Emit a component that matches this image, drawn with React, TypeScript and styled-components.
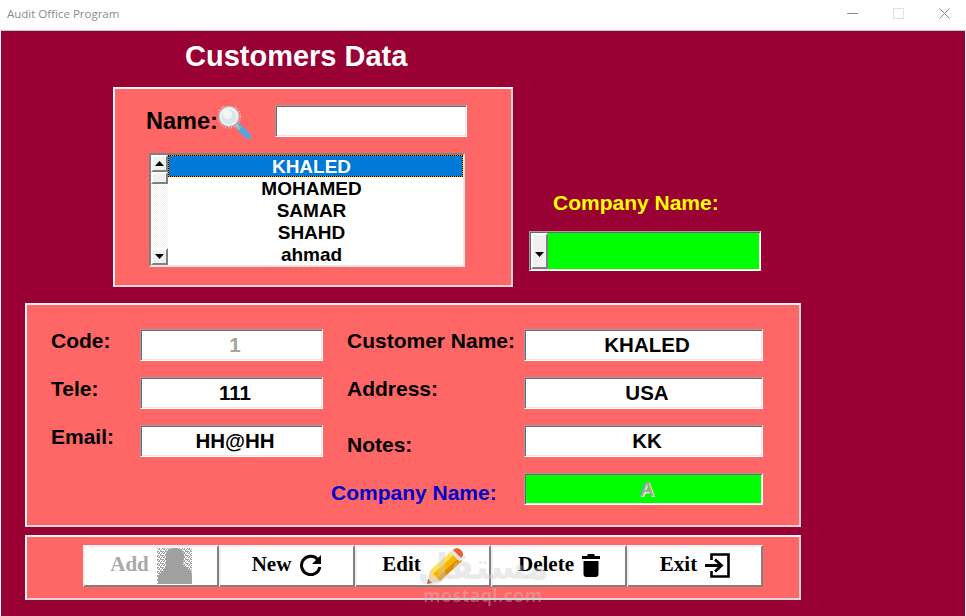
import React from "react";
import styled, { createGlobalStyle, css } from "styled-components";

const Global = createGlobalStyle`
  html, body { margin: 0; padding: 0; background: #fff; width: 966px; height: 616px; overflow: hidden; }
  * { box-sizing: border-box; }
`;

const sunken = css`
  border: 1px solid;
  border-color: #a0a0a0 #fff #fff #a0a0a0;
  box-shadow: inset 1px 1px 0 #696969, inset -1px -1px 0 #e6e6e6;
`;

const Win = styled.div`
  width: 966px;
  height: 616px;
  display: flex;
  flex-direction: column;
  background: #fff;
  position: relative;
  overflow: hidden;
`;
const TitleBar = styled.div`
  height: 31px;
  flex: none;
  display: flex;
  align-items: center;
  justify-content: space-between;
  padding: 0 16px 3px 7px;
  border-bottom: 1px solid #c8c8c8;
`;
const WinTitle = styled.span`
  font: 11.5px "Open Sans", sans-serif;
  color: #8c8c8c;
`;
const WinControls = styled.div`
  display: flex;
  gap: 35px;
  align-items: center;
`;
const Form = styled.div`
  flex: 1;
  margin: 0 1px;
  background: #990033;
  display: flex;
  flex-direction: column;
  font-family: "Liberation Sans", Arial, sans-serif;
  font-weight: bold;
`;
const TopRow = styled.div`
  display: flex;
  padding-left: 112px;
`;
const SearchColumn = styled.div`
  width: 400px;
  display: flex;
  flex-direction: column;
`;
const Heading = styled.h1`
  margin: 0;
  height: 56px;
  padding: 8px 0 0 72px;
  font-size: 29px;
  line-height: 34px;
  color: #fff;
`;
const Panel = styled.div`
  background: #ff6666;
  border: 2px solid;
  border-color: #f4f4f4 #d8d8d8 #d8d8d8 #f4f4f4;
`;
const SearchPanel = styled(Panel)`
  height: 200px;
  padding: 16px 0 0 31px;
`;
const NameRow = styled.div`
  display: flex;
  align-items: center;
  height: 32px;
`;
const NameLabel = styled.label`
  font-size: 23.5px;
  color: #000;
  width: 72px;
`;
const SearchInput = styled.input`
  margin-left: 24px;
  width: 192px;
  height: 32px;
  background: #fff;
  ${sunken}
  outline: none;
`;
const ListBox = styled.div`
  margin: 16px 0 0 3px;
  width: 316px;
  height: 114px;
  background: #fff;
  display: flex;
  border: 2px solid;
  border-color: #808080 #e8e8e8 #e8e8e8 #808080;
`;
const ScrollBar = styled.div`
  width: 17px;
  flex: none;
  display: flex;
  flex-direction: column;
  background: repeating-conic-gradient(#f0f0f0 0 25%, #fff 0 50%) 0 0 / 2px 2px;
`;
const ScrollButton = styled.div<{ $h?: number }>`
  width: 17px;
  height: ${(p) => p.$h ?? 17}px;
  flex: none;
  background: #f0f0f0;
  border: 2px solid;
  border-color: #fff #808080 #808080 #fff;
  display: flex;
  align-items: center;
  justify-content: center;
`;
const Spacer = styled.div`
  flex: 1;
`;
const Rows = styled.div`
  flex: 1;
  display: flex;
  flex-direction: column;
`;
const ListRow = styled.div<{ $selected?: boolean }>`
  height: 22px;
  line-height: 21px;
  font-size: 19px;
  text-align: center;
  padding-right: 8px;
  color: ${(p) => (p.$selected ? "#fff" : "#000")};
  border: 1px ${(p) => (p.$selected ? "dotted #000" : "solid transparent")};
  background: ${(p) =>
    p.$selected ? "linear-gradient(#0078d7,#0078d7) padding-box, #ff9000 border-box" : "transparent"};
`;
const CompanyColumn = styled.div`
  margin-left: 16px;
  padding-top: 160px;
  display: flex;
  flex-direction: column;
`;
const CompanyHeading = styled.div`
  font-size: 21px;
  line-height: 24px;
  color: #ffff00;
  padding-left: 24px;
`;
const Combo = styled.div`
  margin-top: 16px;
  width: 232px;
  height: 40px;
  background: #00ff00;
  display: flex;
  padding: 1px;
  ${sunken}
`;
const ComboButton = styled.div`
  width: 17px;
  background: #f0f0f0;
  border: 2px solid;
  border-color: #fff #808080 #808080 #fff;
  display: flex;
  align-items: center;
  justify-content: center;
  padding-top: 6px;
`;
const DetailsPanel = styled(Panel)`
  margin: 16px 0 0 24px;
  width: 776px;
  height: 224px;
  padding: 24px 0 0 24px;
  display: grid;
  grid-template-columns: 89px 183px 201px 239px;
  grid-auto-rows: 32px;
  row-gap: 16px;
  align-items: center;
`;
const FieldLabel = styled.label<{ $left?: number; $top?: number; $bottom?: number; $color?: string }>`
  font-size: 21px;
  line-height: 24px;
  color: ${(p) => p.$color ?? "#000"};
  padding-left: ${(p) => p.$left ?? 0}px;
  padding-top: ${(p) => p.$top ?? 0}px;
  padding-bottom: ${(p) => p.$bottom ?? 0}px;
  white-space: nowrap;
`;
const Field = styled.input<{ $green?: boolean; $muted?: boolean }>`
  width: 100%;
  height: 32px;
  font: bold 20.5px "Liberation Sans", Arial, sans-serif;
  text-align: center;
  color: ${(p) => (p.$muted ? "#a8a498" : "#000")};
  text-shadow: ${(p) => (p.$muted ? "1px 1px 0 #fff" : "none")};
  background: ${(p) => (p.$green ? "#00ff00" : "#fff")};
  ${sunken}
  outline: none;
  padding: 0 0 1px 7px;
`;
const EmptyCell = styled.div`
  grid-column: span 2;
`;
const ButtonPanel = styled(Panel)`
  margin: 8px 0 0 24px;
  width: 776px;
  height: 65px;
  padding: 8px 0 0 56px;
  display: flex;
  align-items: flex-start;
`;
const ActionButton = styled.button<{ $disabled?: boolean }>`
  width: 136px;
  height: 42px;
  padding: 0 0 4px;
  display: flex;
  align-items: center;
  justify-content: center;
  gap: 8px;
  background: #fff;
  border: 2px solid;
  border-color: #f0f0f0 #808080 #808080 #f0f0f0;
  font: bold 21px "Liberation Serif", "Times New Roman", serif;
  color: ${(p) => (p.$disabled ? "#a9a9a9" : "#000")};
`;
const Watermark = styled.div`
  position: absolute;
  left: 424px;
  top: 546px;
  width: 118px;
  display: flex;
  flex-direction: column;
  align-items: center;
  color: rgba(205, 205, 205, 0.42);
  pointer-events: none;
`;
const WatermarkArabic = styled.span`
  font: bold 36px/42px "DejaVu Sans", sans-serif;
`;
const WatermarkLatin = styled.span`
  font: 600 18px/14px "Open Sans", sans-serif;
  letter-spacing: 0.6px;
`;

const Up = () => (
  <svg width="9" height="5" viewBox="0 0 9 5"><path d="M4.5 0 9 5H0z" fill="#000" /></svg>
);
const Down = () => (
  <svg width="9" height="5" viewBox="0 0 9 5"><path d="M0 0h9L4.5 5z" fill="#000" /></svg>
);

const Magnifier = () => (
  <svg width="33" height="33" viewBox="0 0 33 33" style={{ flex: "none", marginBottom: -2 }}>
    <path d="M20 20 30 30" stroke="#4aa8ec" strokeWidth="6" strokeLinecap="round" />
    <path d="M18 19 22 23" stroke="#a8b4b4" strokeWidth="4" />
    <circle cx="11" cy="10.500" r="10" fill="#eef4f3" stroke="#b9c2c0" strokeWidth="1.2" />
    <circle cx="11" cy="11" r="7.500" fill="#dbe7e4" />
    <circle cx="9.500" cy="8.500" r="4.500" fill="#f2f7f6" />
    <circle cx="11" cy="10.500" r="11.500" fill="none" stroke="#fff" strokeWidth="0.9" strokeDasharray="1 2" />
  </svg>
);

const PersonIcon = () => (
  <svg width="35" height="36" viewBox="0 0 35 36" style={{ flex: "none", marginBottom: -4 }}>
    <defs>
      <pattern id="dith" width="5" height="4" patternUnits="userSpaceOnUse">
        <rect width="1" height="1" fill="#a0a0a0" />
        <rect x="2" width="1" height="1" fill="#a0a0a0" />
        <rect x="1" y="1" width="2" height="1" fill="#a0a0a0" />
        <rect x="4" y="1" width="1" height="1" fill="#a0a0a0" />
        <rect x="3" y="2" width="1" height="1" fill="#a0a0a0" />
        <rect y="3" width="2" height="1" fill="#a0a0a0" />
        <rect x="3" y="3" width="2" height="1" fill="#a0a0a0" />
      </pattern>
    </defs>
    <rect width="35" height="36" fill="url(#dith)" />
    <path
      d="M9 5C10 2 13 0 18 0s9 2 9 7c0 5-1 9-1 10 2 2 9 5 9 10v9H1v-6c0-3 3-6 6-8 1-3 2-3 2-5z"
      fill="#a0a0a0"
    />
  </svg>
);

const RefreshIcon = () => (
  <svg width="23" height="22" viewBox="0 0 23 22" style={{ flex: "none", marginBottom: -2 }}>
    <path d="M18.5 5.2A9.2 9.2 0 1 0 20.8 13" fill="none" stroke="#000" strokeWidth="3" />
    <path d="M22 1v9h-9z" fill="#000" />
  </svg>
);

const PencilIcon = () => (
  <svg width="38" height="37" viewBox="0 0 38 37" style={{ flex: "none", marginBottom: -5, marginLeft: -3 }}>
    <path d="M1 36 4 23 14 33z" fill="#f3d3a8" />
    <path d="M1 36 2 31 6 35z" fill="#8a3a3a" />
    <path d="M4 23 26 3 36 13 14 33z" fill="#f7b500" />
    <path d="M4 23 26 3 29 6 7 26z" fill="#ffe25a" />
    <path d="M11 30 33 10 36 13 14 33z" fill="#e08a00" />
    <path d="M26 3 28 1C30-.5 33 0 35 2c2 2 3 5 1 7l-2 3z" fill="#e8603a" />
    <path d="M24.500 4.500 27 2 36 11 33.500 13.500z" fill="#e6e6e6" />
  </svg>
);

const TrashIcon = () => (
  <svg width="18" height="23" viewBox="0 0 18 23" style={{ flex: "none", marginBottom: -2 }}>
    <path d="M6 0h6l1 2h5v3H0V2h5z" fill="#000" />
    <path d="M1.500 7h15v13a3 3 0 0 1-3 3h-9a3 3 0 0 1-3-3z" fill="#000" />
  </svg>
);

const ExitIcon = () => (
  <svg width="25" height="25" viewBox="0 0 25 25" style={{ flex: "none", marginBottom: -2 }}>
    <path d="M6.500 7V1.500h17v22h-17V18" fill="none" stroke="#000" strokeWidth="2.600" />
    <path d="M0 12.500h15M10 6.500l6.500 6-6.500 6" fill="none" stroke="#000" strokeWidth="2.800" />
  </svg>
);

export default function App() {
  return (
    <Win>
      <Global />
      <TitleBar>
        <WinTitle>Audit Office Program</WinTitle>
        <WinControls>
          <svg width="11" height="11" viewBox="0 0 11 11"><path d="M0 5.500h11" stroke="#8a8a8a" /></svg>
          <svg width="11" height="11" viewBox="0 0 11 11"><rect x=".5" y=".5" width="10" height="10" fill="none" stroke="#e0e0e0" /></svg>
          <svg width="11" height="11" viewBox="0 0 11 11"><path d="M.5.500l10 10M10.500.500l-10 10" stroke="#8a8a8a" /></svg>
        </WinControls>
      </TitleBar>
      <Form>
        <TopRow>
          <SearchColumn>
            <Heading>Customers Data</Heading>
            <SearchPanel>
              <NameRow>
                <NameLabel>Name:</NameLabel>
                <Magnifier />
                <SearchInput />
              </NameRow>
              <ListBox>
                <ScrollBar>
                  <ScrollButton><Up /></ScrollButton>
                  <ScrollButton $h={12} />
                  <Spacer />
                  <ScrollButton><Down /></ScrollButton>
                </ScrollBar>
                <Rows>
                  <ListRow $selected>KHALED</ListRow>
                  <ListRow>MOHAMED</ListRow>
                  <ListRow>SAMAR</ListRow>
                  <ListRow>SHAHD</ListRow>
                  <ListRow>ahmad</ListRow>
                </Rows>
              </ListBox>
            </SearchPanel>
          </SearchColumn>
          <CompanyColumn>
            <CompanyHeading>Company Name:</CompanyHeading>
            <Combo>
              <ComboButton><Down /></ComboButton>
            </Combo>
          </CompanyColumn>
        </TopRow>
        <DetailsPanel>
          <FieldLabel $bottom={8}>Code:</FieldLabel>
          <Field readOnly value="1" $muted />
          <FieldLabel $left={24} $bottom={8}>Customer Name:</FieldLabel>
          <Field readOnly value="KHALED" />
          <FieldLabel $bottom={8}>Tele:</FieldLabel>
          <Field readOnly value="111" />
          <FieldLabel $left={24} $bottom={8}>Address:</FieldLabel>
          <Field readOnly value="USA" />
          <FieldLabel $bottom={8}>Email:</FieldLabel>
          <Field readOnly value="HH@HH" />
          <FieldLabel $left={24} $top={8}>Notes:</FieldLabel>
          <Field readOnly value="KK" />
          <EmptyCell />
          <FieldLabel $left={8} $top={8} $color="#0000cc">Company Name:</FieldLabel>
          <Field readOnly value="A" $green $muted />
        </DetailsPanel>
        <ButtonPanel>
          <ActionButton $disabled>Add <PersonIcon /></ActionButton>
          <ActionButton>New <RefreshIcon /></ActionButton>
          <ActionButton>Edit <PencilIcon /></ActionButton>
          <ActionButton>Delete <TrashIcon /></ActionButton>
          <ActionButton>Exit <ExitIcon /></ActionButton>
        </ButtonPanel>
      </Form>
      <Watermark>
        <WatermarkArabic>مستقل</WatermarkArabic>
        <WatermarkLatin>mostaql.com</WatermarkLatin>
      </Watermark>
    </Win>
  );
}
